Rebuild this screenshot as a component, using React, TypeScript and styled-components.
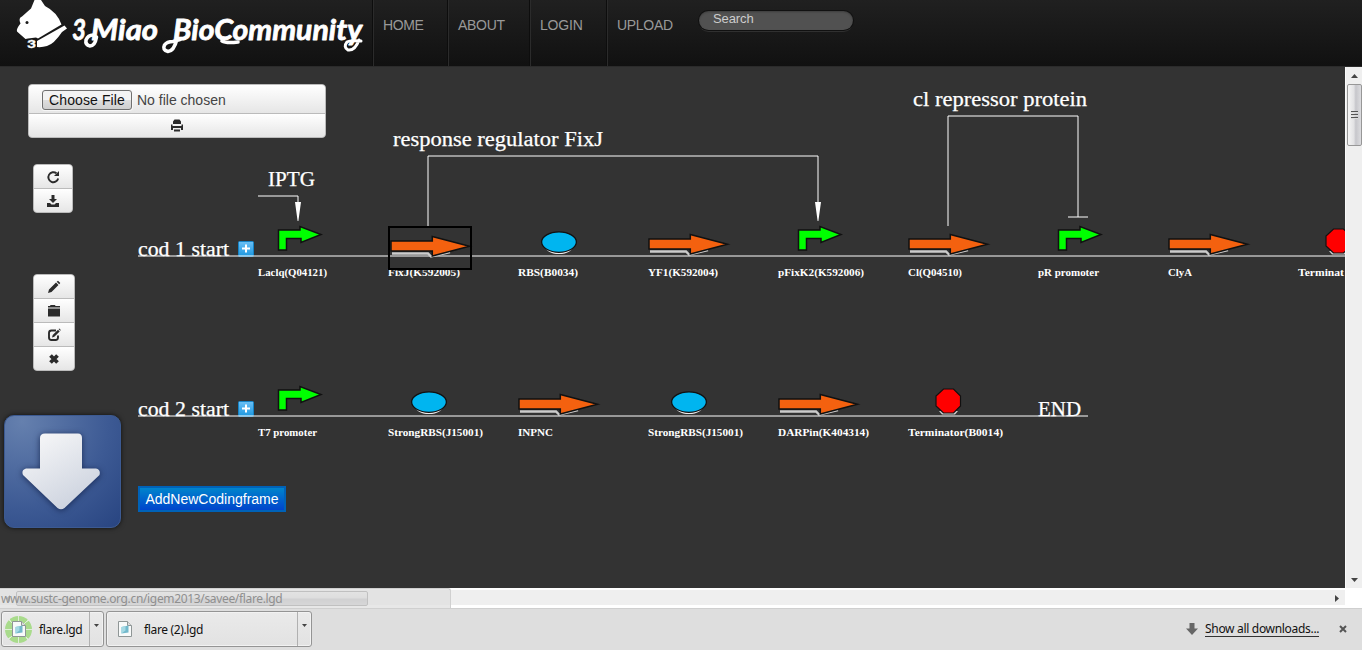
import React from "react";
import styled, { createGlobalStyle } from "styled-components";

const Global = createGlobalStyle`
  html, body { margin: 0; height: 100%; overflow: hidden; }
  body { font-family: "Liberation Sans", Arial, sans-serif; background: #fff; }
  * { box-sizing: border-box; }
`;

const Page = styled.div`
  display: flex;
  flex-direction: column;
  height: 650px;
  width: 1362px;
  overflow: hidden;
`;

/* ---------- header ---------- */
const Header = styled.header`
  display: flex;
  flex: 0 0 67px;
  background: linear-gradient(#202020, #111);
  border-bottom: 1px solid #2b2b2b;
`;
const Brand = styled.div`
  width: 373px;
  height: 66px;
  svg { display: block; }
`;
const NavItem = styled.a<{ $w: number; $track?: number }>`
  width: ${(p) => p.$w}px;
  height: 66px;
  padding: 17px 0 0 9px;
  border-left: 1px solid #2b2b2b;
  box-shadow: -1px 0 0 #0d0d0d;
  color: #999;
  font-size: 14px;
  letter-spacing: ${(p) => p.$track ?? 0}px;
  line-height: 16px;
`;
const SearchBox = styled.div`
  width: 154px;
  height: 19px;
  margin: 11px 0 0 2px;
  padding: 0 0 0 14px;
  border-radius: 10px;
  background: #515151;
  color: #ccc;
  font-size: 13px;
  letter-spacing: -0.1px;
  line-height: 15px;
  box-shadow: inset 0 1px 2px rgba(0, 0, 0, 0.25), 0 0 0 1px #111, 0 2px 0 #303030;
`;

/* ---------- workspace ---------- */
const Middle = styled.div`
  display: flex;
  flex: 0 0 521px;
`;
const Workspace = styled.main`
  position: relative;
  width: 1345px;
  height: 521px;
  background: #333;
  overflow: hidden;
`;
const Diagram = styled.svg`
  position: absolute;
  left: 0;
  top: 0;
  font-family: Georgia, "Liberation Serif", serif;
`;
const Tools = styled.div`
  position: relative;
  display: flex;
  flex-direction: column;
  align-items: flex-start;
  width: 330px;
  padding-top: 17px;
`;
const Group = styled.div<{ $w: number; $x: number; $gap: number }>`
  display: flex;
  flex-direction: column;
  width: ${(p) => p.$w}px;
  margin: 0 0 ${(p) => p.$gap}px ${(p) => p.$x}px;
  border: 1px solid #bbb;
  border-radius: 4px;
  background: #bbb;
  gap: 1px;
  overflow: hidden;
`;
const ToolButton = styled.div<{ $h?: number }>`
  display: flex;
  align-items: center;
  justify-content: center;
  height: ${(p) => p.$h ?? 23}px;
  background: linear-gradient(#fff, #e6e6e6);
`;
const FileRow = styled(ToolButton)`
  justify-content: flex-start;
  padding: 1px 0 0 13px;
  gap: 5px;
  color: #444;
  font-size: 14px;
  white-space: nowrap;
`;
const FileButton = styled.span`
  width: 90px;
  height: 20px;
  border: 1px solid #707070;
  border-radius: 3px;
  background: linear-gradient(#f3f3f3 0 48%, #dedede 52%, #cfcfcf);
  box-shadow: 0 0 0 1px #f7f7f7;
  color: #111;
  letter-spacing: 0.1px;
  text-align: center;
  line-height: 18px;
`;
const BigDownload = styled.div`
  display: flex;
  width: 117px;
  height: 113px;
  margin-left: 4px;
  border-radius: 10px;
  border: 1px solid #3c5a92;
  background: radial-gradient(circle at 15% 5%, #6580ae, #3d5a94 60%, #233f7c 110%);
  box-shadow: 0 0 5px rgba(0, 0, 0, 0.7);
`;
const AddButton = styled.button`
  position: absolute;
  left: 138px;
  top: 419px;
  width: 148px;
  height: 26px;
  padding: 0 0 1px;
  border: 2px solid #0062b8;
  background: linear-gradient(#0084cc, #0044cc);
  color: #fff;
  font: 14px "Liberation Sans", Arial, sans-serif;
  white-space: nowrap;
`;

/* ---------- scrollbars ---------- */
const VScroll = styled.div`
  display: flex;
  flex-direction: column;
  align-items: center;
  justify-content: space-between;
  width: 17px;
  background: #efefef;
  border-left: 1px solid #fafafa;
`;
const VTop = styled.div`
  display: flex;
  flex-direction: column;
  align-items: center;
`;
const ArrowCell = styled.div`
  display: flex;
  align-items: center;
  justify-content: center;
  width: 16px;
  height: 17px;
`;
const VThumb = styled.div`
  display: flex;
  flex-direction: column;
  align-items: center;
  justify-content: center;
  gap: 1px;
  width: 15px;
  height: 62px;
  border: 1px solid #979797;
  border-radius: 2px;
  background: linear-gradient(90deg, #f5f5f5, #e2e2e4 45%, #c6c6cb 60%, #dcdcdf);
`;
const Grip = styled.i`
  width: 7px;
  height: 2px;
  background: #555;
  border-bottom: 1px solid #ddd;
`;
const HScroll = styled.div`
  position: relative;
  display: flex;
  align-items: center;
  flex: 0 0 20px;
  background: linear-gradient(#fff 0 2px, #efefef 2px 17px, #fff 17px);
  border-right: 17px solid #fff;
`;
const HThumb = styled.div`
  width: 352px;
  height: 15px;
  border: 1px solid #666;
  border-radius: 2px;
  background: linear-gradient(#eee, #d8d8d8 45%, #a8a8ac 55%, #bdbdc0);
`;
const HEnd = styled.div`
  margin-left: auto;
  padding-right: 6px;
  display: flex;
`;
const StatusBubble = styled.div`
  position: absolute;
  left: 0;
  top: 0;
  width: 451px;
  height: 20px;
  padding-left: 1px;
  border: solid #d0d0d0;
  border-width: 1px 1px 0 0;
  border-radius: 0 3px 0 0;
  background: rgba(223, 223, 223, 0.75);
  color: #8f8f8f;
  font: 12px/19px "Noto Sans", "Open Sans", sans-serif;
  letter-spacing: -0.34px;
  white-space: nowrap;
`;

/* ---------- download shelf ---------- */
const Shelf = styled.footer`
  display: flex;
  flex: 1;
  padding: 2px 0 0 1px;
  border-top: 1px solid #cfcfcf;
  background: #dedede;
  color: #111;
  font: 12px "Noto Sans", "Open Sans", sans-serif;
`;
const Download = styled.div<{ $w: number }>`
  display: flex;
  width: ${(p) => p.$w}px;
  height: 36px;
  margin-right: 2px;
  border: 1px solid #949494;
  border-radius: 3px;
  background: linear-gradient(#eaeaea, #e2e2e2);
  box-shadow: inset 0 0 0 1px #f2f2f2;
`;
const DownloadBody = styled.div`
  display: flex;
  align-items: center;
  flex: 1;
  padding-left: 2px;
  white-space: nowrap;
  letter-spacing: -0.35px;
`;
const DownloadMenu = styled.div`
  display: flex;
  justify-content: center;
  width: 14px;
  padding-top: 12px;
  border-left: 1px solid #b0b0b0;
`;
const ShelfEnd = styled.div`
  display: flex;
  align-items: center;
  margin-left: auto;
  padding-right: 15px;
  height: 36px;
`;
const AllLink = styled.span`
  margin: 1px 20px 0 7px;
  width: 114px;
  letter-spacing: -0.31px;
  line-height: 14px;
  border-bottom: 1px solid #333;
  white-space: nowrap;
`;

/* ---------- diagram parts ---------- */
type Kind = "promoter" | "gene" | "rbs" | "stop";
type Part = { kind: Kind; x: number; label: string; w: number; selected?: boolean };

const rows: { y: number; title: string; end: number; parts: Part[] }[] = [
  {
    y: 189, title: "cod 1 start", end: 1345,
    parts: [
      { kind: "promoter", x: 258, label: "Laclq(Q04121)", w: 69 },
      { kind: "gene", x: 388, label: "FixJ(K592005)", w: 72, selected: true },
      { kind: "rbs", x: 518, label: "RBS(B0034)", w: 60 },
      { kind: "gene", x: 648, label: "YF1(K592004)", w: 70 },
      { kind: "promoter", x: 778, label: "pFixK2(K592006)", w: 86 },
      { kind: "gene", x: 908, label: "Cl(Q04510)", w: 54 },
      { kind: "promoter", x: 1038, label: "pR promoter", w: 61 },
      { kind: "gene", x: 1168, label: "ClyA", w: 24 },
      { kind: "stop", x: 1298, label: "Terminat", w: 46 },
    ],
  },
  {
    y: 349, title: "cod 2 start", end: 1088,
    parts: [
      { kind: "promoter", x: 258, label: "T7 promoter", w: 59 },
      { kind: "rbs", x: 388, label: "StrongRBS(J15001)", w: 95 },
      { kind: "gene", x: 518, label: "INPNC", w: 35 },
      { kind: "rbs", x: 648, label: "StrongRBS(J15001)", w: 95 },
      { kind: "gene", x: 778, label: "DARPin(K404314)", w: 91 },
      { kind: "stop", x: 908, label: "Terminator(B0014)", w: 95 },
    ],
  },
];

const Glyph = ({ kind }: { kind: Kind }) => {
  switch (kind) {
    case "promoter":
      return <path d="M20.500-26H42V-29.500L63-21.500 43-13.500V-17.500H28.500V-6H20.500Z" fill="#0f0" stroke="#111" strokeWidth="1.500" />;
    case "gene":
      return (
        <>
          <path d="M2-4.500H38L41-1.500 60-6" fill="none" stroke="#ccc" strokeWidth="2.400" />
          <path d="M1-17H42.300V-21.500L79.500-11.700 42.300-2V-7H1Z" fill="#f4610f" stroke="#111" strokeWidth="1.500" />
        </>
      );
    case "rbs":
      return (
        <>
          <ellipse cx="41" cy="-11.800" rx="15" ry="9.800" fill="#eee" />
          <ellipse cx="41" cy="-13.900" rx="17.400" ry="10.200" fill="#00b5f0" stroke="#111" strokeWidth="1.300" />
        </>
      );
    default:
      return (
        <>
          <path d="M31-5 34-1.500H47L50-5Z" fill="#ccc" />
          <path d="M35.500-27H45.500L52.500-20V-10L45.500-3H35.500L28-10V-20Z" fill="#f00" stroke="#111" strokeWidth="1.200" />
        </>
      );
  }
};

const Fit = (p: { x: number; y: number; w: number; size: number; bold?: boolean; children: string }) => (
  <text x={p.x} y={p.y} fontSize={p.size} fontWeight={p.bold ? 700 : 400} textLength={p.w}
    lengthAdjust="spacingAndGlyphs" fill="#fff" stroke="#fff" strokeWidth={p.bold ? 0 : 0.25}>{p.children}</text>
);

const Circuit = () => (
  <Diagram width="1345" height="521">
    <defs>
      <linearGradient id="plus" x2="0" y2="1">
        <stop stopColor="#6cc0f5" /><stop offset="1" stopColor="#1b97e0" />
      </linearGradient>
    </defs>
    {rows.map((r) => (
      <g key={r.y}>
        <Fit x={138} y={r.y} w={91} size={20.5}>{r.title}</Fit>
        <g transform={`translate(238 ${r.y - 15})`}>
          <rect x=".5" y=".5" width="15" height="15" rx="1" fill="url(#plus)" stroke="#1584c7" />
          <path d="M8 3.500V11.500M4 7.500H12" stroke="#fff" strokeWidth="2" />
        </g>
        {r.parts.map((p) => (
          <g key={p.x}>
            <Fit x={p.x} y={r.y + 20} w={p.w} size={10.5} bold>{p.label}</Fit>
            {!p.selected && <g transform={`translate(${p.x} ${r.y})`}><Glyph kind={p.kind} /></g>}
          </g>
        ))}
        <path d={`M138 ${r.y}H${r.end}`} stroke="#fff" />
      </g>
    ))}
    <g transform="translate(390 191)"><Glyph kind="gene" /></g>
    <rect x="389" y="160" width="82" height="42" fill="none" stroke="#000" strokeWidth="2" />
    <Fit x={1038} y={349} w={43} size={20.5}>END</Fit>
    <Fit x={268} y={119} w={47} size={20.5}>IPTG</Fit>
    <Fit x={393} y={79} w={210} size={20.5}>response regulator FixJ</Fit>
    <Fit x={913} y={39} w={174} size={20.5}>cl repressor protein</Fit>
    <g fill="none" stroke="#fff">
      <path d="M258 129H298V136" />
      <path d="M428 159V89H818V136" />
      <path d="M948 159V49H1078V150M1068 150H1088" />
    </g>
    <path d="M295 135H301L298.400 154H297.600ZM815 135H821L818.400 154H817.600Z" fill="#fff" />
  </Diagram>
);

const Icon = ({ children }: { children: React.ReactNode }) => (
  <svg width="14" height="14" viewBox="0 0 14 14" fill="#2b2b2b">{children}</svg>
);

const FileIcon = () => (
  <svg width="14" height="16" viewBox="0 0 14 16">
    <path d="M.5.5H9.500L13.500 4.500V15.500H.5Z" fill="#f8fafa" stroke="#8f9696" />
    <path d="M9.500.5V4.500H13.500" fill="#ddd" stroke="#8f9696" />
    <path d="M3.500 6 10.500 4.500V11.500L3.500 12.500Z" fill="#72b9cc" />
    <path d="M3.500 6 7.500 5V9.500L3.500 12.500Z" fill="#a4d9e4" />
  </svg>
);

const Tri = ({ d, w = 7, h = 4 }: { d: string; w?: number; h?: number }) => (
  <svg width={w} height={h}><path d={d} fill="#444" /></svg>
);

const ProgressFile = styled.div`
  display: grid;
  place-items: center;
  width: 27px;
  height: 27px;
  margin: 0 7px 0 1px;
  border-radius: 50%;
  background: repeating-conic-gradient(#e0eed8 0 3deg, #a9db8c 4deg 42deg, #e0eed8 45deg);
`;
const PlainFile = styled.div`
  display: flex;
  margin: 0 12px 0 9px;
`;

export default function App() {
  return (
    <Page>
      <Global />
      <Header>
        <Brand>
          <svg width="373" height="66" fill="#fff" fontFamily='Lato, "Liberation Sans", sans-serif'>
            <path d="M34.500 0H41L45 6Q57 12 61.500 24.500L38 38.500 36 37.500 28 38.500 25.500 39 17 31.500Q16 29 20.500 23.500 18 18 22 16.500L31 8.500Z" />
            <path d="M37 41 64.500 25.500 67 28.500 62 32Q54 44 47 46 42 47.500 37 47Z" />
            <circle cx="27" cy="22.500" r="1.500" fill="#1b1b1b" />
            <text x="27" y="48" fontSize="12" fontWeight="900" stroke="#fff" strokeWidth=".3" textLength="9" lengthAdjust="spacingAndGlyphs">3</text>
            <g fontSize="29" fontWeight="700" fontStyle="italic" stroke="#fff" strokeWidth=".8" strokeLinejoin="round">
              <text x="72" y="40" textLength="14" lengthAdjust="spacingAndGlyphs">3</text>
              <text x="91" y="40" textLength="67" lengthAdjust="spacingAndGlyphs">Miao</text>
              <text x="173" y="40" textLength="189" lengthAdjust="spacingAndGlyphs">BioCommunity</text>
            </g>
            <g fill="none" stroke="#fff" strokeWidth="3.600" strokeLinecap="round">
              <path d="M96.500 37Q95 46 90 46 85 45 86 40 88 35 93 35" />
              <path d="M177 39Q174 51 168 51.500 162 50 164.500 45 167 41.500 173 41.500L180 39.500" />
              <path d="M222 41Q226 43.500 238 42" />
              <path d="M359 40Q355 51 348 50 343 47 347 42 350 40 361 41" strokeWidth="3" />
            </g>
          </svg>
        </Brand>
        <NavItem $w={75} $track={-0.4}>HOME</NavItem>
        <NavItem $w={82} $track={-0.3}>ABOUT</NavItem>
        <NavItem $w={77} $track={-0.2}>LOGIN</NavItem>
        <NavItem $w={90} $track={-0.3}>UPLOAD</NavItem>
        <SearchBox>Search</SearchBox>
      </Header>

      <Middle>
        <Workspace>
          <Circuit />
          <Tools>
            <Group $w={298} $x={28} $gap={26}>
              <FileRow $h={28}>
                <FileButton>Choose File</FileButton>No file chosen
              </FileRow>
              <ToolButton>
                <Icon><path d="M4.500.5H9.500L11 2.500V5H3V2.500ZM1 5.500H2.500V7H11.500V5.500H13V11H11V9H3V11H1ZM4 10.500H10V12.500H4Z" /></Icon>
              </ToolButton>
            </Group>
            <Group $w={40} $x={33} $gap={61}>
              <ToolButton>
                <Icon><path d="M12.200 8.500A5 5 0 1 1 10.500 3.300" fill="none" stroke="#2b2b2b" strokeWidth="1.900" /><path d="M13 1V6H8Z" /></Icon>
              </ToolButton>
              <ToolButton>
                <Icon><path d="M5.500 1H8.500V5H11L7 9 3 5H5.500ZM1 9H4L5.500 10.500H8.500L10 9H13V13H1Z" /></Icon>
              </ToolButton>
            </Group>
            <Group $w={42} $x={33} $gap={44}>
              <ToolButton>
                <Icon><path d="M1 13 2 9.500 9 2.500 11.500 5 4.500 12ZM9.700 1.800 11 .7 13.300 3 12.200 4.300Z" /></Icon>
              </ToolButton>
              <ToolButton>
                <Icon><path d="M1 2H3L3.500 1H8L8.500 2H13V3.500H1ZM1 4.500H13V12.500H1Z" /></Icon>
              </ToolButton>
              <ToolButton>
                <Icon><path d="M9 2.500H4.500Q2 2.500 2 5V9.500Q2 12 4.500 12H8.500Q11 12 11 9.500V7.500" fill="none" stroke="#2b2b2b" strokeWidth="1.900" /><path d="M5 9.500 5.700 7 11 1.700 12.700 3.400 7.300 8.700ZM11.600 1.100 12.300.5 13.800 2 13.200 2.700Z" /></Icon>
              </ToolButton>
              <ToolButton>
                <Icon><path d="M3.500 3.500 10.500 10.500M10.500 3.500 3.500 10.500" stroke="#2b2b2b" strokeWidth="3.800" /></Icon>
              </ToolButton>
            </Group>
            <BigDownload>
              <svg width="115" height="111">
                <defs>
                  <linearGradient id="arrow" x2=".6" y2="1">
                    <stop stopColor="#fafafa" /><stop offset="1" stopColor="#cdd3df" />
                  </linearGradient>
                </defs>
                <path d="M40 17.500H73Q77 17.500 77 22V52.500H91Q96 53.500 94.500 59L59.500 92Q56 94.500 52.500 92L18 59Q16 54 21 52.500H35V22Q35 17.500 40 17.500Z"
                  fill="url(#arrow)" style={{ filter: "drop-shadow(0 1px 3px rgba(15,30,70,.8))" }} />
              </svg>
            </BigDownload>
          </Tools>
          <AddButton>AddNewCodingframe</AddButton>
        </Workspace>
        <VScroll>
          <VTop>
            <ArrowCell><Tri d="M0 4 3.500 0 7 4Z" /></ArrowCell>
            <VThumb><Grip /><Grip /><Grip /></VThumb>
          </VTop>
          <ArrowCell><Tri d="M0 0H7L3.500 4Z" /></ArrowCell>
        </VScroll>
      </Middle>

      <HScroll>
        <ArrowCell><Tri w={4} h={7} d="M4 0V7L0 3.500Z" /></ArrowCell>
        <HThumb />
        <HEnd><Tri w={4} h={7} d="M0 0V7L4 3.500Z" /></HEnd>
        <StatusBubble>www.sustc-genome.org.cn/igem2013/savee/flare.lgd</StatusBubble>
      </HScroll>

      <Shelf>
        <Download $w={103}>
          <DownloadBody><ProgressFile><FileIcon /></ProgressFile>flare.lgd</DownloadBody>
          <DownloadMenu><Tri w={5} h={3} d="M0 0H5L2.500 3Z" /></DownloadMenu>
        </Download>
        <Download $w={206}>
          <DownloadBody><PlainFile><FileIcon /></PlainFile>flare (2).lgd</DownloadBody>
          <DownloadMenu><Tri w={5} h={3} d="M0 0H5L2.500 3Z" /></DownloadMenu>
        </Download>
        <ShelfEnd>
          <svg width="12" height="12"><path d="M3.500 0H8.500V5.500H12L6 12 0 5.500H3.500Z" fill="#666" /></svg>
          <AllLink>Show all downloads...</AllLink>
          <svg width="8" height="8"><path d="M1 1 7 7M7 1 1 7" stroke="#555" strokeWidth="2" /></svg>
        </ShelfEnd>
      </Shelf>
    </Page>
  );
}
